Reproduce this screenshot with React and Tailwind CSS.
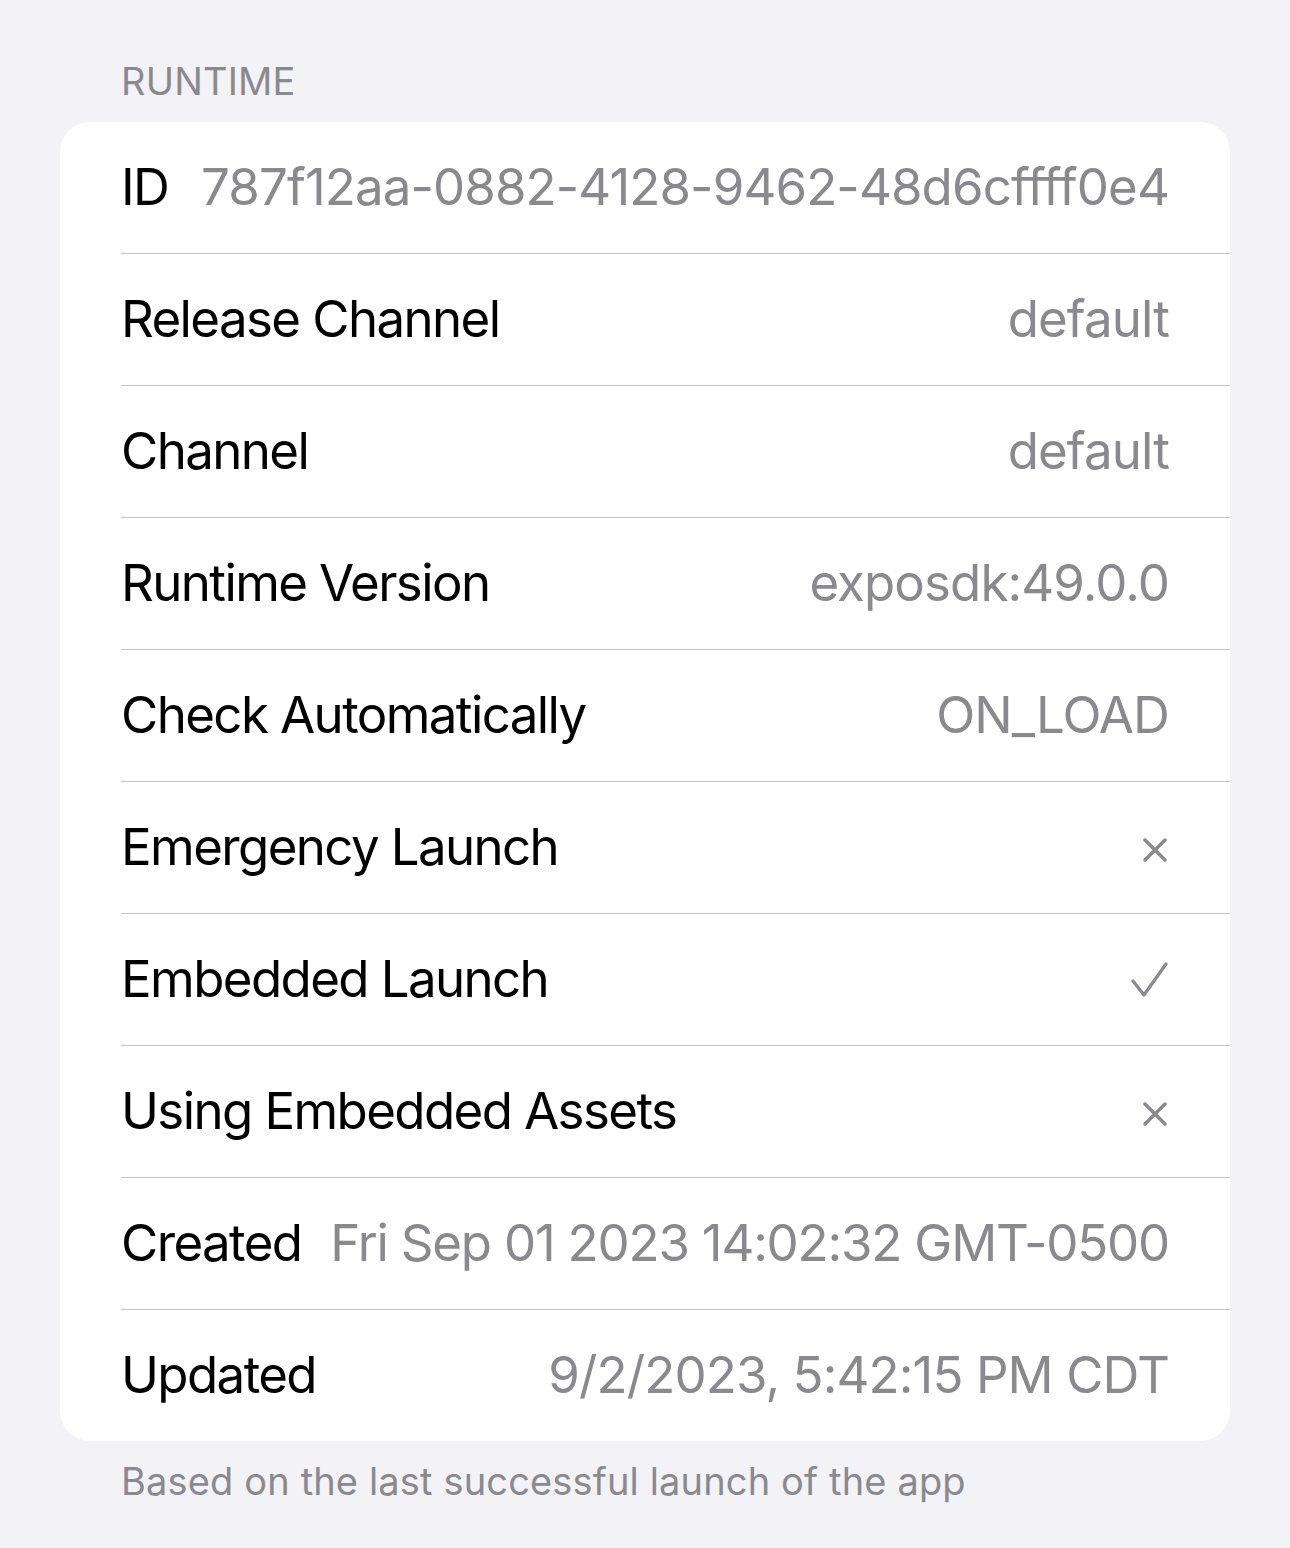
import React from 'react';

const rows = [
    { label: 'ID', value: '787f12aa-0882-4128-9462-48d6cffff0e4' },
    { label: 'Release Channel', value: 'default' },
    { label: 'Channel', value: 'default' },
    { label: 'Runtime Version', value: 'exposdk:49.0.0' },
    { label: 'Check Automatically', value: 'ON_LOAD' },
    { label: 'Emergency Launch', icon: 'x' },
    { label: 'Embedded Launch', icon: 'check' },
    { label: 'Using Embedded Assets', icon: 'x' },
    { label: 'Created', value: 'Fri Sep 01 2023 14:02:32 GMT-0500', tight: true },
    { label: 'Updated', value: '9/2/2023, 5:42:15 PM CDT' },
];

const Cross = () => (
    <svg width="24" height="24" viewBox="0 0 24 24" className="mr-[2px] mt-[4px]">
        <path d="M2 2 L22 22 M22 2 L2 22" stroke="#8a8a8e" strokeWidth="3.4" strokeLinecap="round" fill="none" />
    </svg>
);

const Check = () => (
    <svg width="38" height="36" viewBox="0 0 38 36">
        <path d="M2 19 L13 33 L35 2" stroke="#8a8a8e" strokeWidth="3.2" strokeLinecap="round" strokeLinejoin="round" fill="none" />
    </svg>
);

const App = () => {
    return (
        <div className="min-h-screen w-[1290px] bg-[#f2f2f7] pt-[58px] pb-[40px] px-[60px]" style={{ fontFamily: 'Inter, "Noto Sans", sans-serif' }}>
            <div className="pl-[61px] text-[38px] leading-[46px] text-[#8a8a8e] tracking-[0.2px] mb-[18px]">RUNTIME</div>

            <div className="bg-white rounded-[30px] overflow-hidden">
                {rows.map((row, i) => (
                    <div key={row.label} className="pl-[61px]">
                        <div className={`h-[131px] flex items-center justify-between gap-[24px] pr-[61px] ${i < rows.length - 1 ? 'border-b border-[#c6c6c8]' : ''} box-content`}>
                            <span className="text-[51px] text-black tracking-[-1.6px] whitespace-nowrap">{row.label}</span>
                            {row.value && (
                                <span className={`text-[51px] text-[#8a8a8e] whitespace-nowrap ${row.tight ? 'tracking-[-1.2px]' : 'tracking-[-0.9px]'}`}>{row.value}</span>
                            )}
                            {row.icon === 'x' && <Cross />}
                            {row.icon === 'check' && <Check />}
                        </div>
                    </div>
                ))}
            </div>

            <div className="pl-[61px] mt-[17px] text-[38px] leading-[46px] text-[#8a8a8e] tracking-[0.15px]">Based on the last successful launch of the app</div>
        </div>
    );
};

export default App;
